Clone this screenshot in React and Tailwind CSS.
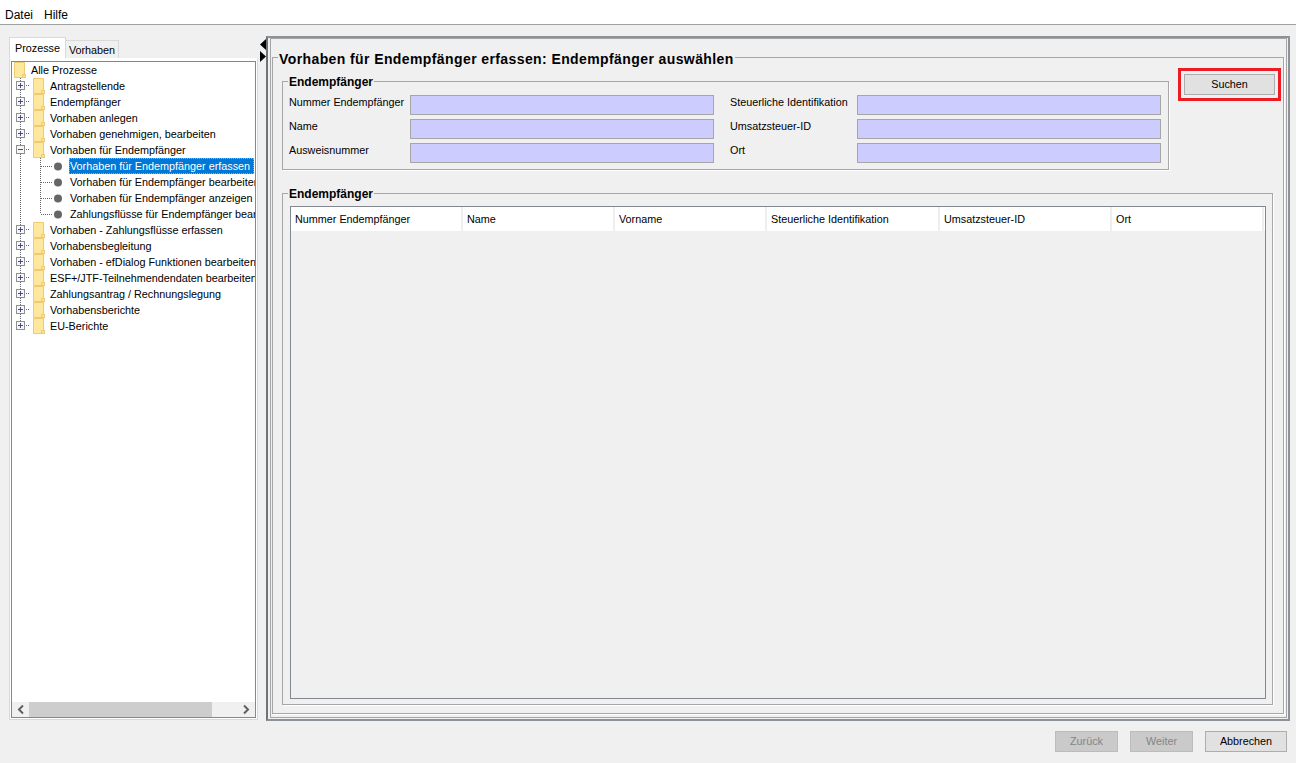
import React from "react";

const Folder = ({ x }) => (
  <g transform={`translate(${x} 0)`}>
    <path d="M1.5 0.5H11.5V12.5H12.5V15.5H1.5Z" fill="#ffe79c" stroke="#eccb72" />
    <path d="M9.5 12.5H12.5V15.5H9.5Z" fill="#ffe18a" stroke="#eccb72" />
  </g>
);

const Expander = ({ open }) => (
  <g>
    <rect x="4.5" y="3.5" width="8" height="8" fill="#f6f6f6" stroke="#8f8f8f" />
    <path d="M6 7.5H11" stroke="#3a4f8f" />
    {!open && <path d="M8.5 5V10" stroke="#3a4f8f" />}
    <path d="M14 7.5H18" stroke="#666" strokeDasharray="1 1" />
  </g>
);

const Lead = ({ kind, open, last, continues = true }) => (
  <svg width="57" height="16" className="shrink-0" viewBox="0 0 57 16">
    {kind === "root" && <Folder x={1} />}
    {kind === "branch" && (
      <>
        <path d="M8.5 0V3" stroke="#666" strokeDasharray="1 1" />
        {continues && <path d="M8.5 12V16" stroke="#666" strokeDasharray="1 1" />}
        <Expander open={open} />
        <Folder x={20} />
      </>
    )}
    {kind === "leaf" && (
      <>
        <path d="M8.5 0V16" stroke="#666" strokeDasharray="1 1" />
        <path d={last ? "M28.5 0V8" : "M28.5 0V16"} stroke="#666" strokeDasharray="1 1" />
        <path d="M29 8.5H41" stroke="#666" strokeDasharray="1 1" />
        <circle cx="46" cy="8.5" r="4" fill="#666" />
      </>
    )}
  </svg>
);

const Row = ({ kind, label, open, last, selected, continues }) => (
  <div className="flex h-4 items-center whitespace-nowrap">
    <Lead kind={kind} open={open} last={last} continues={continues} />
    {kind === "root" && <span className="-ml-[38px]">{label}</span>}
    {kind === "branch" && <span className="-ml-[19px]">{label}</span>}
    {kind === "leaf" && (
      <span
        className={
          selected
            ? "w-[185px] h-4 leading-[14px] bg-[#0078d7] text-white border border-dotted border-[#e0a040]"
            : "pl-px"
        }
      >
        {label}
      </span>
    )}
  </div>
);

const Field = ({ label, right }) => (
  <>
    <span className={`h-5 leading-[14px] ${right ? "pl-4" : ""}`}>{label}</span>
    <div className="h-5 bg-[#ccccff] border border-[#a6a6a6]" />
  </>
);

const columns = [
  ["Nummer Endempfänger", "w-[172px]"],
  ["Name", "w-[152px]"],
  ["Vorname", "w-[152px]"],
  ["Steuerliche Identifikation", "w-[173px]"],
  ["Umsatzsteuer-ID", "w-[172px]"],
  ["Ort", "w-[152px]"],
];

export default function App() {
  return (
    <div
      className="flex h-screen w-full flex-col overflow-hidden bg-[#f0f0f0] text-[10.8px] text-black"
      style={{ fontFamily: "'Liberation Sans', Arial, sans-serif" }}
    >
      <div className="flex h-[25px] gap-[11px] border-b border-[#a0a0a0] bg-white pl-[5px] pt-[8px] text-[12px] leading-[14px]">
        <span>Datei</span>
        <span>Hilfe</span>
      </div>

      <div className="flex h-[696px] pl-[9px]">
        <div className="mt-[12px] w-[249px]">
          <div className="flex h-[21px] items-end">
            <div className="flex h-[21px] w-[57px] items-center justify-center border border-b-0 border-[#d9d9d9] bg-white">
              Prozesse
            </div>
            <div className="flex h-[18px] w-[53px] items-center justify-center border border-l-0 border-b-0 border-[#d9d9d9] bg-[#f0f0f0] pt-[2px]">
              Vorhaben
            </div>
          </div>
          <div className="h-[662px] border border-[#d9d9d9] border-t-white bg-white px-px pt-[2px] pb-px">
            <div className="flex h-[657px] w-[245px] flex-col border border-[#828790] bg-white">
              <div className="flex-1 overflow-hidden">
                <Row kind="root" label="Alle Prozesse" />
                <Row kind="branch" open={false} label="Antragstellende" />
                <Row kind="branch" open={false} label="Endempfänger" />
                <Row kind="branch" open={false} label="Vorhaben anlegen" />
                <Row kind="branch" open={false} label="Vorhaben genehmigen, bearbeiten" />
                <Row kind="branch" open label="Vorhaben für Endempfänger" />
                <Row kind="leaf" selected label="Vorhaben für Endempfänger erfassen" />
                <Row kind="leaf" label="Vorhaben für Endempfänger bearbeiten" />
                <Row kind="leaf" label="Vorhaben für Endempfänger anzeigen" />
                <Row kind="leaf" last label="Zahlungsflüsse für Endempfänger bearbeiten" />
                <Row kind="branch" label="Vorhaben - Zahlungsflüsse erfassen" />
                <Row kind="branch" label="Vorhabensbegleitung" />
                <Row kind="branch" label="Vorhaben - efDialog Funktionen bearbeiten" />
                <Row kind="branch" label="ESF+/JTF-Teilnehmendendaten bearbeiten" />
                <Row kind="branch" label="Zahlungsantrag / Rechnungslegung" />
                <Row kind="branch" label="Vorhabensberichte" />
                <Row kind="branch" continues={false} label="EU-Berichte" />
              </div>
              <div className="flex h-[15px] items-center bg-[#f0f0f0]">
                <svg width="17" height="15" viewBox="0 0 17 15" className="shrink-0">
                  <path d="M11 3.5L7 7.5L11 11.5" fill="none" stroke="#606060" strokeWidth="2" />
                </svg>
                <div className="h-[15px] w-[183px] bg-[#cdcdcd]" />
                <div className="flex-1" />
                <svg width="17" height="15" viewBox="0 0 17 15" className="shrink-0">
                  <path d="M6 3.5L10 7.5L6 11.5" fill="none" stroke="#606060" strokeWidth="2" />
                </svg>
              </div>
            </div>
          </div>
        </div>

        <div className="mt-[14px] w-[8px]">
          <svg width="8" height="23" viewBox="0 0 8 23">
            <path d="M8 0V11L2 5.5Z" fill="#000" />
            <path d="M2 12V23L8 17.5Z" fill="#000" />
          </svg>
        </div>

        <div className="mt-[11px] h-[685px] w-[1024px] border-2 border-l-[#6f7479] border-[#8d9298] bg-[#f0f0f0]">
          <div className="ml-[2px] h-[680px] w-[1017px] border border-[#a6a6a6] bg-[#f0f0f0] pl-px pt-[8px]">
            <fieldset className="h-[667px] w-[1012px] border border-[#a6a6a6] pl-[9px] shadow-[1px_1px_0_#fff]">
              <legend className="-ml-[4px] px-px pt-[4px] text-[14px] font-bold leading-[16px] tracking-[0.4px]">
                Vorhaben für Endempfänger erfassen: Endempfänger auswählen
              </legend>
              <div className="flex items-start">
                <fieldset className="mt-[6px] h-[97px] w-[887px] border border-[#a6a6a6] pl-[6px] shadow-[1px_1px_0_#fff]">
                  <legend className="-ml-px px-px pt-[2px] text-[12px] font-bold leading-[14px]">Endempfänger</legend>
                  <div className="mt-[6px] grid grid-cols-[121px_304px_143px_304px] gap-y-1">
                    <Field label="Nummer Endempfänger" />
                    <Field right label="Steuerliche Identifikation" />
                    <Field label="Name" />
                    <Field right label="Umsatzsteuer-ID" />
                    <Field label="Ausweisnummer" />
                    <Field right label="Ort" />
                  </div>
                </fieldset>
                <div className="ml-[9px] mt-[1px] border-[3px] border-[#ed1c24] p-[3px]">
                  <button className="block h-[21px] w-[91px] border border-[#adadad] bg-[#e1e1e1]">
                    Suchen
                  </button>
                </div>
              </div>
              <fieldset className="mt-[15px] h-[520px] w-[991px] border border-[#a6a6a6] pl-[7px] shadow-[1px_1px_0_#fff]">
                <legend className="-ml-[2px] px-px pt-[2px] text-[12px] font-bold leading-[14px]">Endempfänger</legend>
                <div className="mt-[5px] h-[493px] w-[976px] border border-[#828790] bg-[#f0f0f0]">
                  <div className="flex h-[24px] bg-white">
                    {columns.map(([name, w]) => (
                      <div
                        key={name}
                        className={`${w} flex items-center border-r-2 border-[#eeeeee] pl-[4px] pt-px`}
                      >
                        {name}
                      </div>
                    ))}
                  </div>
                </div>
              </fieldset>
            </fieldset>
          </div>
        </div>
      </div>

      <div className="flex justify-end gap-3 pt-[10px] pr-[9px]">
        <button disabled className="h-[21px] w-[63px] border border-[#bcbcbc] bg-[#cacaca] text-[#858585]">
          Zurück
        </button>
        <button disabled className="h-[21px] w-[63px] border border-[#bcbcbc] bg-[#cacaca] text-[#858585]">
          Weiter
        </button>
        <button className="h-[21px] w-[82px] border border-[#adadad] bg-[#e1e1e1]">
          Abbrechen
        </button>
      </div>
    </div>
  );
}
